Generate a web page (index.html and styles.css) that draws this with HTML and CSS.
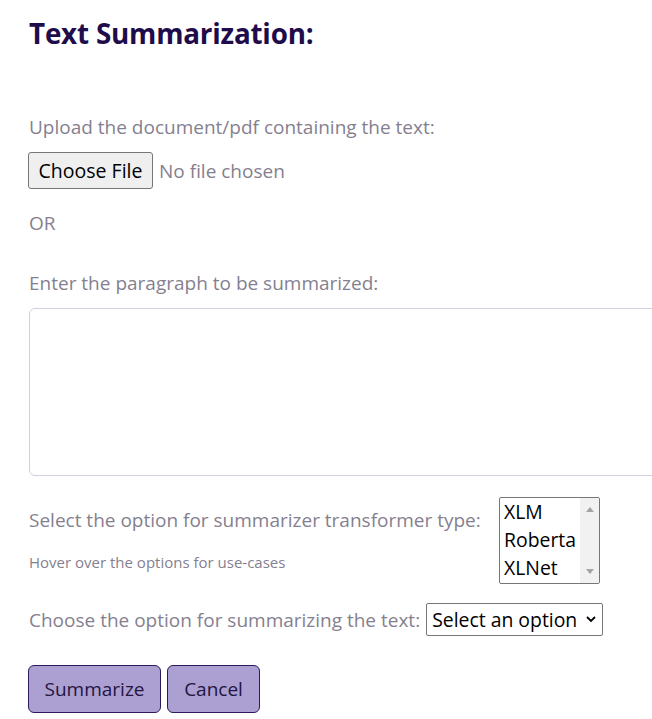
FILE: index.html
```html
<!DOCTYPE html>
<html>
<head>
<meta charset="utf-8">
<link rel="stylesheet" href="styles.css">
</head>
<body>
<main class="page">
  <h2 class="title">Text Summarization:</h2>
  <p class="label upload-label">Upload the document/pdf containing the text:</p>
  <div class="file-row">
    <span class="file-btn">Choose File</span>
    <span class="file-name">No file chosen</span>
  </div>
  <p class="label or">OR</p>
  <p class="label para-label">Enter the paragraph to be summarized:</p>
  <div class="para-wrap">
    <textarea class="para"></textarea>
  </div>
  <div class="type-row">
    <div class="type-text">
      <p class="label">Select the option for summarizer transformer type:</p>
      <p class="hint">Hover over the options for use-cases</p>
    </div>
    <div class="listbox">
      <div class="options">
        <div>XLM</div>
        <div>Roberta</div>
        <div>XLNet</div>
      </div>
      <div class="scroll">
        <svg width="8" height="5" viewBox="0 0 8 5"><path d="M0 5 L4 0 L8 5Z" fill="#a3a3a3"/></svg>
        <svg width="8" height="5" viewBox="0 0 8 5"><path d="M0 0 L4 5 L8 0Z" fill="#a3a3a3"/></svg>
      </div>
    </div>
  </div>
  <div class="choose-row">
    <span class="label">Choose the option for summarizing the text:</span>
    <span class="dropdown">Select an option
      <svg width="10" height="7" viewBox="0 0 10 7"><path d="M1 1 L5 5 L9 1" fill="none" stroke="#000" stroke-width="1.8"/></svg>
    </span>
  </div>
  <div class="actions">
    <button class="btn btn-sum">Summarize</button>
    <button class="btn btn-cancel">Cancel</button>
  </div>
</main>
</body>
</html>
```

FILE: styles.css
```css
html, body {
  margin: 0;
  padding: 0;
  background: #fff;
  overflow: hidden;
}
body {
  font-family: "Open Sans", "Lato", sans-serif;
  width: 652px;
  height: 719px;
}
.page {
  padding: 0 0 0 29px;
}
.title {
  margin: 0;
  padding-top: 14px;
  font-size: 27.8px;
  line-height: 38px;
  font-weight: 700;
  color: #1f0c4b;
  letter-spacing: -0.2px;
}
.label {
  margin: 0;
  font-size: 19px;
  line-height: 24px;
  color: #857f8f;
}
.upload-label {
  margin-top: 63px;
}
.file-row {
  display: flex;
  align-items: center;
  margin-top: 13px;
  margin-left: -1px;
}
.file-btn {
  box-sizing: border-box;
  height: 37px;
  width: 125px;
  display: flex;
  align-items: center;
  justify-content: center;
  background: #efefef;
  border: 1px solid #767676;
  border-radius: 3px;
  font-size: 19.5px;
  color: #000;
}
.file-name {
  margin-left: 6px;
  font-size: 19px;
  color: #857f8f;
}
.or {
  margin-top: 22px;
}
.para-label {
  margin-top: 36px;
}
.para-wrap {
  margin-top: 13px;
  overflow: hidden;
}
.para {
  display: block;
  box-sizing: border-box;
  margin: 0;
  width: 640px;
  height: 168px;
  border: 1px solid #d3cfde;
  border-radius: 6px;
  resize: none;
  outline: none;
}
.type-row {
  display: flex;
  align-items: flex-start;
  margin-top: 21px;
}
.type-text {
  padding-top: 11px;
  width: 470px;
}
.hint {
  margin: 21px 0 0 0;
  font-size: 15px;
  line-height: 18px;
  color: #857f8f;
}
.listbox {
  box-sizing: border-box;
  width: 101px;
  height: 87px;
  border: 1px solid #767676;
  border-radius: 2px;
  display: flex;
  overflow: hidden;
}
.options {
  flex: 1;
  padding: 0 0 0 4px;
  font-size: 19.4px;
  line-height: 28px;
  color: #000;
}
.scroll {
  width: 19px;
  background: #f1f1f1;
  display: flex;
  flex-direction: column;
  justify-content: space-between;
  align-items: center;
  padding: 9px 0 9px;
}
.choose-row {
  display: flex;
  align-items: center;
  margin-top: 19px;
}
.dropdown {
  box-sizing: border-box;
  margin-left: 6px;
  height: 33px;
  width: 177px;
  border: 1px solid #767676;
  border-radius: 2px;
  display: flex;
  align-items: center;
  justify-content: space-between;
  padding: 0 6px 0 5px;
  font-size: 19.4px;
  color: #000;
}
.actions {
  display: flex;
  gap: 6px;
  margin-top: 29px;
  margin-left: -1px;
}
.btn {
  box-sizing: border-box;
  height: 48px;
  padding: 0;
  background: #ac9fd2;
  border: 1px solid #2b1a5c;
  border-radius: 6px;
  font-family: inherit;
  font-size: 19px;
  color: #231540;
}
.btn-sum {
  width: 133px;
}
.btn-cancel {
  width: 93px;
}
```
